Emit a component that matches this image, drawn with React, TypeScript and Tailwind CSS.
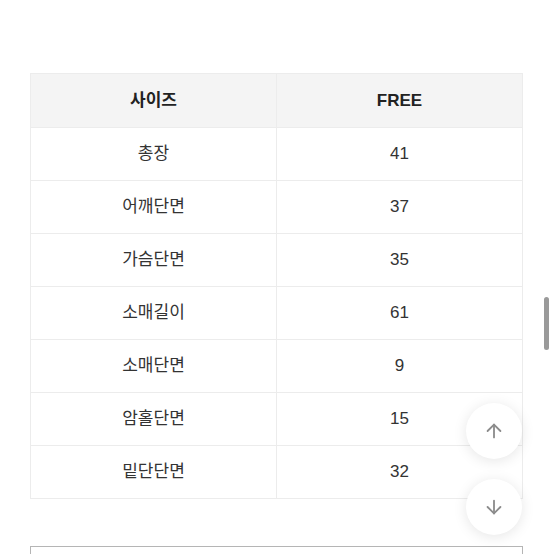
import { ArrowUp, ArrowDown } from "lucide-react";

const rows: [string, string][] = [
  ["총장", "41"],
  ["어깨단면", "37"],
  ["가슴단면", "35"],
  ["소매길이", "61"],
  ["소매단면", "9"],
  ["암홀단면", "15"],
  ["밑단단면", "32"],
];

export default function App() {
  return (
    <div
      className="relative w-[554px] h-[554px] overflow-hidden bg-white"
      style={{ fontFamily: '"Liberation Sans", "Noto Sans CJK KR", sans-serif' }}
    >
      <div className="pt-[73px] px-[30px] pr-[31px]">
        <table className="w-full border-collapse table-fixed text-[17px]">
          <thead>
            <tr className="h-[54px] bg-[#f4f4f4]">
              <th className="border border-[#ececec] font-semibold text-[#222]">사이즈</th>
              <th className="border border-[#ececec] font-semibold text-[#222]">FREE</th>
            </tr>
          </thead>
          <tbody>
            {rows.map(([label, value]) => (
              <tr key={label} className="h-[53px]">
                <td className="border border-[#ececec] text-center text-[#333]">{label}</td>
                <td className="border border-[#ececec] text-center text-[#333]">{value}</td>
              </tr>
            ))}
          </tbody>
        </table>
        <div className="mt-[47px] h-[40px] border border-[#b5b5b5]" />
      </div>

      {/* floating scroll buttons */}
      <button className="absolute left-[466px] top-[403px] w-[56px] h-[56px] rounded-full bg-white shadow-[0_2px_14px_rgba(0,0,0,0.10)] flex items-center justify-center">
        <ArrowUp className="w-[22px] h-[22px] text-[#8c8c8c]" strokeWidth={2} />
      </button>
      <button className="absolute left-[466px] top-[479px] w-[56px] h-[56px] rounded-full bg-white shadow-[0_2px_14px_rgba(0,0,0,0.10)] flex items-center justify-center">
        <ArrowDown className="w-[22px] h-[22px] text-[#8c8c8c]" strokeWidth={2} />
      </button>

      {/* scrollbar thumb */}
      <div className="absolute left-[544px] top-[297px] w-[5px] h-[53px] rounded-full bg-[#9a9a9a]" />
    </div>
  );
}
